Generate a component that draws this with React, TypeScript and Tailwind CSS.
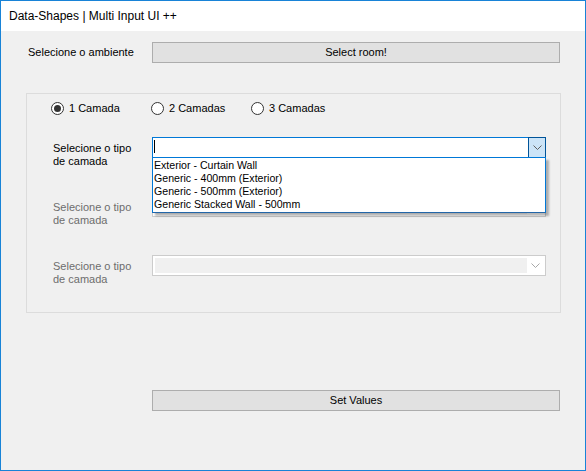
import React from "react";

const SANS = "font-['Liberation_Sans',Arial,sans-serif]";

const ITEMS = [
  "Exterior - Curtain Wall",
  "Generic - 400mm (Exterior)",
  "Generic - 500mm (Exterior)",
  "Generic Stacked Wall - 500mm",
];

function Chevron({ color }: { color: string }) {
  return (
    <svg width="9" height="5" viewBox="0 0 9 5" fill="none">
      <path d="M0.5 0.5 L4.5 4.5 L8.5 0.5" stroke={color} strokeWidth="1" />
    </svg>
  );
}

function Radio({ label, checked }: { label: string; checked?: boolean }) {
  return (
    <div className="flex w-[100px] items-center">
      <span className="flex h-[13px] w-[13px] items-center justify-center rounded-full border border-[#333333] bg-white">
        {checked && <span className="h-[7px] w-[7px] rounded-full bg-[#333333]" />}
      </span>
      <span className="ml-[5px] leading-[13px] text-black">{label}</span>
    </div>
  );
}

function Label({ disabled }: { disabled?: boolean }) {
  return (
    <div
      className={`w-[125px] shrink-0 pl-[26px] pt-[5px] leading-[13px] ${
        disabled ? "text-[#6d6d6d]" : "text-black"
      }`}
    >
      Selecione o tipo
      <br />
      de camada
    </div>
  );
}

function DisabledCombo() {
  return (
    <div className="flex h-[21px] w-[394px] border border-[#cccccc] bg-white p-[2px]">
      <div className="h-full w-[372px] bg-[#f0f0f0]" />
      <div className="flex flex-1 items-center justify-center">
        <Chevron color="#a8a8a8" />
      </div>
    </div>
  );
}

export default function App() {
  return (
    <div className={`${SANS} flex h-[471px] w-[586px] flex-col border border-[#1883d7] bg-[#f0f0f0] text-[11px]`}>
      {/* title bar */}
      <div className="flex h-[30px] shrink-0 items-center bg-white pl-[8px] text-[12px] text-black">
        Data-Shapes | Multi Input UI ++
      </div>

      {/* room picker */}
      <div className="mt-[11px] flex h-[21px] items-center">
        <div className="w-[151px] shrink-0 pl-[27px] text-black">Selecione o ambiente</div>
        <button className="h-[21px] w-[408px] border border-[#adadad] bg-[#e1e1e1] text-black">
          Select room!
        </button>
      </div>

      {/* layers group */}
      <div className="ml-[25px] mt-[30px] h-[220px] w-[535px] shrink-0 border border-[#dcdcdc] pt-[8px]">
        <div className="flex h-[13px] pl-[24px]">
          <Radio label="1 Camada" checked />
          <Radio label="2 Camadas" />
          <Radio label="3 Camadas" />
        </div>

        <div className="mt-[22px] flex h-[59px]">
          <Label />
          <div className="relative z-10 flex h-[21px] w-[394px] border border-[#0078d7] bg-white">
            <div className="flex-1 pl-[1px] pt-[2px]">
              <div className="h-[13px] w-px bg-black" />
            </div>
            <div className="-my-px -mr-px flex h-[21px] w-[18px] items-center justify-center border border-[#005499] bg-[#cce4f7]">
              <Chevron color="#606060" />
            </div>
            {/* open dropdown list */}
            <div className="absolute left-[-1px] top-[19px] h-[56px] w-[394px] border border-[#0078d7] border-b-[#2366a8] bg-white pl-[1px] pt-[1px] text-[10.6px] shadow-[3px_3px_2px_rgba(0,0,0,0.28)]">
              {ITEMS.map((it) => (
                <div key={it} className="leading-[13px] text-black">
                  {it}
                </div>
              ))}
            </div>
          </div>
        </div>

        <div className="flex h-[59px]">
          <Label disabled />
          <DisabledCombo />
        </div>

        <div className="flex h-[59px]">
          <Label disabled />
          <DisabledCombo />
        </div>
      </div>

      <button className="ml-[151px] mt-[77px] h-[21px] w-[408px] shrink-0 border border-[#adadad] bg-[#e1e1e1] text-black">
        Set Values
      </button>
    </div>
  );
}
